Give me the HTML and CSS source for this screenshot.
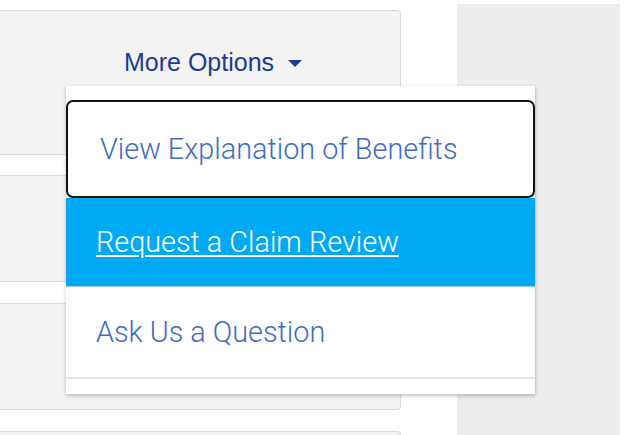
FILE: index.html
```html
<!DOCTYPE html>
<html>
<head>
<meta charset="utf-8">
<link rel="stylesheet" href="styles.css">
</head>
<body>
<div class="page">
  <div class="cards">
    <div class="card card-top">
      <button class="more">More Options <span class="caret"></span></button>
    </div>
    <div class="card card-mid"></div>
    <div class="card card-mid card-third"></div>
    <div class="card card-last"></div>
  </div>
  <div class="side"></div>
</div>
<div class="menu">
  <a class="item item-focus" href="#">View Explanation of Benefits</a>
  <a class="item item-active" href="#">Request a Claim Review</a>
  <a class="item item-plain" href="#">Ask Us a Question</a>
  <div class="menu-foot"></div>
</div>
</body>
</html>
```
FILE: styles.css
```css
html, body {
  margin: 0;
  padding: 0;
  background: #ffffff;
  overflow: hidden;
  width: 624px;
  height: 435px;
}
.page {
  display: flex;
  align-items: flex-start;
  height: 435px;
  overflow: hidden;
}
.cards {
  width: 407px;
  margin-left: -6px;
  padding-top: 10px;
  display: flex;
  flex-direction: column;
}
.card {
  background: #f3f3f3;
  border: 1px solid #d3dcdf;
  border-radius: 4px;
  box-sizing: border-box;
}
.card-top {
  height: 145px;
  padding: 37px 0 0 129px;
}
.card-mid {
  height: 107px;
  margin-top: 20px;
}
.card-third {
  margin-top: 21px;
}
.card-last {
  height: 5px;
  margin-top: 21px;
  border-bottom: 0;
  border-radius: 4px 4px 0 0;
}
.more {
  border: 0;
  background: transparent;
  padding: 0;
  font-family: "Liberation Sans", Arial, sans-serif;
  font-size: 25px;
  color: #1b3c95;
  display: flex;
  align-items: center;
  gap: 14px;
  cursor: pointer;
}
.caret {
  width: 0;
  height: 0;
  border-left: 7px solid transparent;
  border-right: 7px solid transparent;
  border-top: 7px solid #1b3c95;
  margin-top: 1px;
}
.side {
  margin-left: 56px;
  margin-top: 4px;
  width: 163px;
  height: 431px;
  background: #ecedef;
}
.menu {
  position: absolute;
  left: 66px;
  top: 86px;
  width: 469px;
  height: 308px;
  box-sizing: border-box;
  padding-top: 14px;
  background: #ffffff;
  box-shadow: 0 2px 4px rgba(0, 0, 0, 0.22), 1px 0 2px rgba(0, 0, 0, 0.08);
  display: flex;
  flex-direction: column;
}
.item {
  display: flex;
  align-items: center;
  box-sizing: border-box;
  padding-left: 30px;
  font-family: Roboto, "Liberation Sans", sans-serif;
  font-weight: 300;
  font-size: 28.8px;
  color: #3f6cc2;
  text-decoration: none;
}
.item-focus {
  height: 98px;
  border: 2px solid #111111;
  border-radius: 7px;
  padding-left: 32px;
}
.item-active {
  height: 89px;
  background: #00a9f4;
  color: #ffffff;
  text-decoration: underline;
  text-decoration-thickness: 2px;
  text-underline-offset: 3px;
  border-bottom: 1px solid #9fd6ee;
}
.item-plain {
  height: 92px;
  border-bottom: 2px solid #dfe6e8;
}
.menu-foot {
  flex: 1;
}
```
